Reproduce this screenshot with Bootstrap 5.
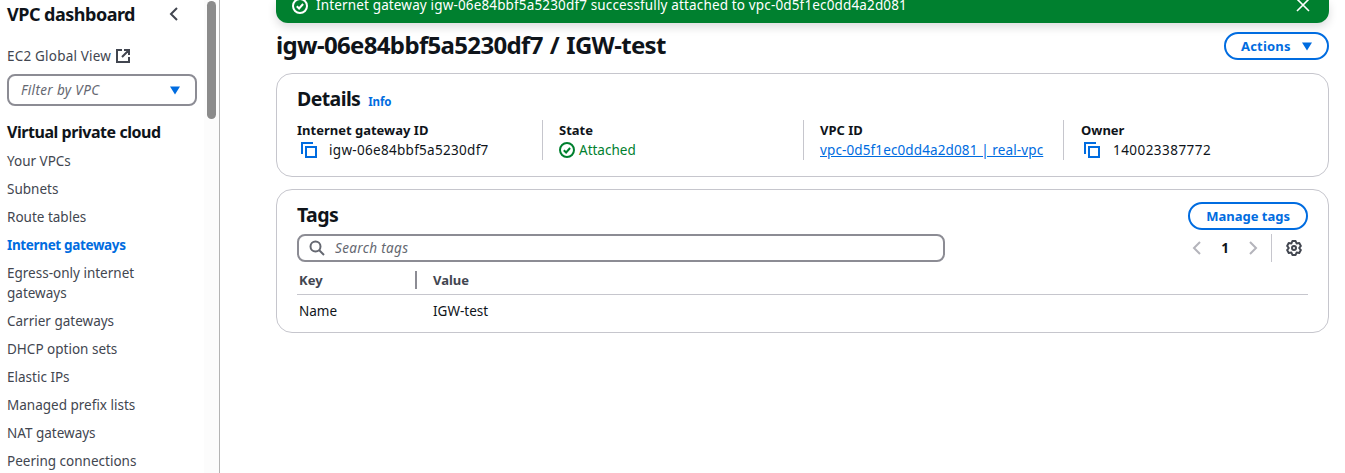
<!DOCTYPE html>
<html lang="en">
<head>
<meta charset="utf-8">
<meta name="viewport" content="width=device-width, initial-scale=1">
<title>Internet gateway | VPC</title>
<link href="https://cdn.jsdelivr.net/npm/bootstrap@5.3.0/dist/css/bootstrap.min.css" rel="stylesheet">
<style>
body{font-family:"Noto Sans","Open Sans",sans-serif;font-size:13.5px;line-height:20px;color:#0f141a;height:473px;overflow:hidden;background:#fff}
svg{display:block;flex:none;fill:none;stroke:currentColor;stroke-width:2}
a{color:#006ce0}
.side{width:220px;height:473px;border-right:1px solid #b4b4b4}
.side-body{width:204px;padding:3px 7px 0}
.track{width:15px;background:#fcfcfc;padding:1px 3px}
.thumb{width:9px;height:118px;border-radius:5px;background:#8b8b8b}
.side-title{font-size:18px;font-weight:700;line-height:22px;letter-spacing:-.5px}
.muted-ink{color:#424650}
.global-view{margin-top:21px;letter-spacing:.2px}
.side-link{display:block;color:#424650;text-decoration:none;margin-bottom:8px;width:150px}
.side-link.active{color:#006ce0;font-weight:700;letter-spacing:-.35px}
.field{border:2px solid #8c8c94;border-radius:8px;color:#656871;font-style:italic;letter-spacing:.35px}
.vpc-filter{width:190px;height:32px;padding:0 14px 0 12px;margin-top:8px}
.group-title{font-size:16px;font-weight:700;margin:16px 0 9px;letter-spacing:-.45px}
.main-pane{padding:0 16px 0 56px}
.flash{height:23px;background:#00802f;color:#fff;border-radius:0 0 12px 12px;padding:0 18px 8px 16px;box-shadow:0 4px 10px rgba(0,7,22,.14)}
.flash-text{letter-spacing:.15px}
.page-title{font-size:24px;font-weight:700;line-height:28px;margin:-2px 0 0;letter-spacing:-.66px;word-spacing:1.5px}
.pill{height:28px;border:2px solid #006ce0;border-radius:20px;color:#006ce0;font-size:13px;font-weight:700;line-height:20px;padding:2px 16px}
.pill:hover{background:#f0fbff;color:#002b66;border-color:#002b66}
.actions{width:105px;letter-spacing:.2px;padding:2px 14px 2px 15px}
.panel{border:1px solid #c6c6cd;border-radius:16px;padding:0 20px}
.panel-title{font-size:19.5px;font-weight:700;line-height:24px;margin:0;letter-spacing:-.6px}
.info{font-size:11.5px;font-weight:700;text-decoration:none;letter-spacing:-.15px}
.facts{display:grid;grid-template-columns:245px 261px 260px 1fr;margin-top:8px}
.facts>div+div{border-left:1px solid #c6c6cd;padding-left:16px}
.facts>div:last-child{padding-left:17px}
.label{font-weight:700;font-size:13px}
.ident{letter-spacing:.3px}
.owner{letter-spacing:.45px}
.vpc{letter-spacing:.12px}
.copy{color:#006ce0;margin:0 12px 0 4px}
.facts>div:last-child .copy{margin-left:3px;margin-right:13px}
.ok{color:#00802f}
.search{width:648px;height:28px;padding:0 10px}
.rule{width:1px;height:28px;background:#c6c6cd;margin:0 14px 0 10px}
.tags-table{margin:8px 0 0;width:100%}
.t-row{display:grid;grid-template-columns:116px 1fr}
.t-head{border-bottom:1px solid #c6c6cd;color:#424650;font-weight:700;height:25px;font-size:13px}
.t-row>div{padding-left:2px}
.t-row>div+div{padding-left:20px}
.t-head>div:first-child{border-right:2px solid #8c8c94;height:18px;line-height:18px;margin-top:1px;width:120px}
</style>
</head>
<body>
<div class="d-flex">
<nav class="side d-flex flex-shrink-0">
  <div class="side-body">
    <div class="d-flex justify-content-between align-items-center">
      <span class="side-title">VPC dashboard</span>
      <svg class="muted-ink me-3" width="14" height="14" viewBox="0 0 14 14"><path d="M10 1 4 7l6 6"/></svg>
    </div>
    <div class="d-flex align-items-center muted-ink global-view"><span>EC2 Global View</span>
      <svg class="ms-1" width="16" height="16" viewBox="0 0 16 16"><path d="M7 2H2v12h12V9M9 2h5v5M14 2 7 9"/></svg>
    </div>
    <div class="field vpc-filter d-flex justify-content-between align-items-center"><span>Filter by VPC</span>
      <svg width="12" height="9" viewBox="0 0 12 9"><path d="M1 .5h10L6 8.5z" fill="#006ce0" stroke="none"/></svg>
    </div>
    <div class="group-title">Virtual private cloud</div>
    <a class="side-link">Your VPCs</a>
    <a class="side-link">Subnets</a>
    <a class="side-link">Route tables</a>
    <a class="side-link active">Internet gateways</a>
    <a class="side-link">Egress-only internet gateways</a>
    <a class="side-link">Carrier gateways</a>
    <a class="side-link">DHCP option sets</a>
    <a class="side-link">Elastic IPs</a>
    <a class="side-link">Managed prefix lists</a>
    <a class="side-link">NAT gateways</a>
    <a class="side-link">Peering connections</a>
  </div>
  <div class="track"><div class="thumb"></div></div>
</nav>
<main class="main-pane flex-grow-1">
  <div class="flash d-flex align-items-end">
    <svg width="16" height="16" viewBox="0 0 16 16"><circle cx="8" cy="7" r="7"/><path d="m4.800 7.200 2.300 2.300 4-4.500"/></svg>
    <span class="ms-2 flash-text">Internet gateway igw-06e84bbf5a5230df7 successfully attached to vpc-0d5f1ec0dd4a2d081</span>
    <svg class="ms-auto" width="16" height="16" viewBox="0 0 16 16" style="stroke-width:1.6"><path d="m2 0 12 12M14 0 2 12"/></svg>
  </div>
  <div class="d-flex justify-content-between align-items-center" style="margin-top:9px">
    <h1 class="page-title">igw-06e84bbf5a5230df7 / IGW-test</h1>
    <button class="btn pill d-flex align-items-center justify-content-between actions">Actions <svg width="12" height="9" viewBox="0 0 12 9"><path d="M1 .5h10L6 8.5z" fill="#006ce0" stroke="none"/></svg></button>
  </div>
  <section class="panel" style="margin-top:13px;height:104px">
    <div class="d-flex align-items-baseline gap-2" style="padding-top:13px"><h2 class="panel-title">Details</h2><a class="info">Info</a></div>
    <div class="facts">
      <div><div class="label">Internet gateway ID</div>
        <div class="d-flex align-items-center"><svg class="copy" width="16" height="16" viewBox="0 0 16 16"><path d="M1 12V1h11M5 5h10v10H5z"/></svg><span class="ident">igw-06e84bbf5a5230df7</span></div></div>
      <div><div class="label">State</div>
        <div class="d-flex align-items-center gap-1 ok"><svg width="16" height="16" viewBox="0 0 16 16"><circle cx="8" cy="8" r="7"/><path d="m4.800 8.200 2.300 2.300 4-4.500"/></svg><span>Attached</span></div></div>
      <div><div class="label">VPC ID</div><a class="vpc text-decoration-underline">vpc-0d5f1ec0dd4a2d081 | real-vpc</a></div>
      <div><div class="label">Owner</div>
        <div class="d-flex align-items-center"><svg class="copy" width="16" height="16" viewBox="0 0 16 16"><path d="M1 12V1h11M5 5h10v10H5z"/></svg><span class="owner">140023387772</span></div></div>
    </div>
  </section>
  <section class="panel" style="margin-top:12px;height:144px">
    <div class="d-flex justify-content-between align-items-start" style="padding-top:12px"><h2 class="panel-title" style="padding-top:1px">Tags</h2><button class="btn pill manage">Manage tags</button></div>
    <div class="d-flex justify-content-between align-items-center" style="margin-top:4px">
      <div class="field search d-flex align-items-center gap-2"><svg width="16" height="16" viewBox="0 0 16 16"><circle cx="6.500" cy="6.500" r="5"/><path d="m10 10 5 5"/></svg><span style="padding-left:2px">Search tags</span></div>
      <div class="d-flex align-items-center">
        <svg style="color:#b4b4bb" width="16" height="16" viewBox="0 0 16 16"><path d="m11 2-6 6 6 6"/></svg>
        <strong class="text-center" style="width:40px">1</strong>
        <svg style="color:#b4b4bb" width="16" height="16" viewBox="0 0 16 16"><path d="m5 2 6 6-6 6"/></svg>
        <div class="rule"></div>
        <svg class="muted-ink" style="margin-right:6px" width="16" height="16" viewBox="0 0 16 16"><path stroke-linejoin="round" d="M6.400 1h3.200l1 2.500 2.660-.4 1.600 2.800L13.200 8l1.660 2.100-1.600 2.800-2.660-.4L9.600 15H6.400l-1-2.500-2.660.4-1.600-2.800L2.800 8 1.140 5.900l1.600-2.800 2.660.4z"/><circle cx="8" cy="8" r="2"/></svg>
      </div>
    </div>
    <div class="tags-table">
      <div class="t-row t-head"><div>Key</div><div>Value</div></div>
      <div class="t-row" style="padding-top:6px"><div>Name</div><div>IGW-test</div></div>
    </div>
  </section>
</main>
</div>
<script src="https://cdn.jsdelivr.net/npm/bootstrap@5.3.0/dist/js/bootstrap.bundle.min.js"></script>
</body>
</html>
